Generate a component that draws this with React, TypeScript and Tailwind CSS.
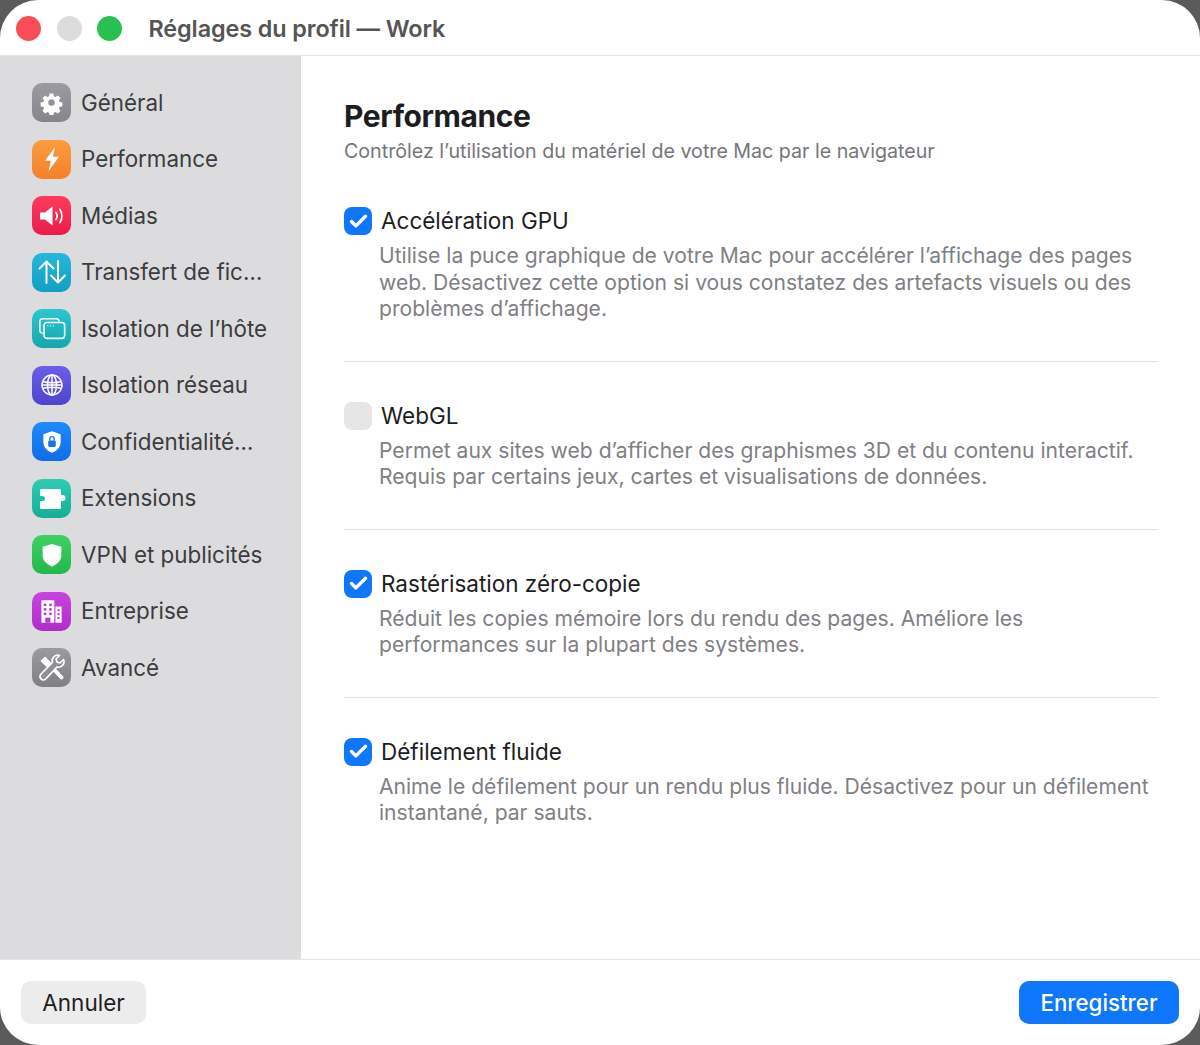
import type { ReactNode } from "react";
import { Check } from "lucide-react";

const SANS = "font-['Inter','Liberation_Sans',sans-serif]";

function Gear() {
  return (
    <svg viewBox="0 0 24 24" className="w-[25px] h-[25px]" fill="#fff">
      <path
        fillRule="evenodd"
        d="M10 2.500h4l.6 2.900 1.700.7 2.500-1.600 2.800 2.800-1.600 2.500.7 1.700 2.900.6v4l-2.900.6-.7 1.700 1.600 2.500-2.800 2.800-2.500-1.600-1.700.7-.6 2.900h-4l-.6-2.900-1.700-.7-2.500 1.600-2.800-2.800 1.600-2.500-.7-1.700-2.900-.6v-4l2.900-.6.7-1.700-1.600-2.500 2.800-2.800 2.500 1.600 1.700-.7zM12 8.600a3.400 3.400 0 1 0 0 6.800 3.400 3.400 0 0 0 0-6.800z"
        transform="translate(1.200 1.200) scale(.9)"
      />
    </svg>
  );
}

function Bolt() {
  return (
    <svg viewBox="0 0 24 24" className="w-[28px] h-[28px]" fill="#fff">
      <path d="M14.500 2 6 13.600h5L9 22.500 18 10h-5.200z" />
    </svg>
  );
}

function Speaker() {
  return (
    <svg viewBox="0 0 32 32" className="w-[32px] h-[32px]" fill="none" stroke="#fff">
      <path d="M4 12.500h5L16.500 6.500v19L9 19.500H4z" fill="#fff" stroke="none" />
      <path d="M20 12.500c1.400 2 1.400 5 0 7" strokeWidth="1.800" strokeLinecap="round" />
      <path d="M24 9.500c2.400 3.800 2.400 9.200 0 13" strokeWidth="1.800" strokeLinecap="round" />
    </svg>
  );
}

function Transfer() {
  return (
    <svg viewBox="0 0 32 32" className="w-[32px] h-[32px]" fill="none" stroke="#fff" strokeWidth="2" strokeLinecap="round" strokeLinejoin="round">
      <path d="M10.500 27V5.500M3.500 12.500l7-7 7 7" />
      <path d="M22 5v21.500M15 19.500l7 7 7-7" />
    </svg>
  );
}

function Windows() {
  return (
    <svg viewBox="0 0 32 32" className="w-[30px] h-[30px]" fill="none" stroke="#fff" strokeWidth="1.700">
      <path d="M6 20.500c-1.500 0-3-1-3-3V8c0-2 1.500-3 3-3h14.500c2 0 3 1.300 3 3" />
      <rect x="7.500" y="9" width="22" height="17" rx="3" />
      <path d="M11 12.500h1.200M14 12.500h1.200M17 12.500h1.200" strokeWidth="1.200" />
    </svg>
  );
}

function Globe() {
  return (
    <svg viewBox="0 0 24 24" className="w-[24px] h-[24px]" fill="none" stroke="#fff" strokeWidth="1.500">
      <circle cx="12" cy="12" r="10" />
      <ellipse cx="12" cy="12" rx="4.500" ry="10" />
      <path d="M12 2v20M2.600 8.500c5 1.600 13.800 1.600 18.800 0M2.600 15.500c5-1.600 13.800-1.600 18.800 0M2 12h20" />
    </svg>
  );
}

function ShieldLock() {
  return (
    <svg viewBox="0 0 24 24" className="w-[26px] h-[26px]">
      <path d="M12 2 20 4.800v7.200c0 4.800-3.200 8-8 10-4.800-2-8-5.200-8-10V4.800z" fill="#fff" />
      <rect x="8.500" y="10.500" width="7" height="6" rx="1.200" fill="#1673f0" />
      <path d="M10 10.500V9a2 2 0 0 1 4 0v1.500" fill="none" stroke="#1673f0" strokeWidth="1.300" />
    </svg>
  );
}

function Puzzle() {
  return (
    <svg viewBox="0 0 32 32" className="w-[32px] h-[32px]" fill="#fff">
      <path d="M4 8.500C4 7.700 4.700 7 5.500 7h18c.8 0 1.500.7 1.500 1.500V13h1.500a3 3 0 0 1 0 6H25v6.500c0 .8-.7 1.500-1.500 1.500h-18C4.700 27 4 26.300 4 25.500V19h2.500a2.500 2.500 0 0 0 0-5H4z" />
    </svg>
  );
}

function Shield() {
  return (
    <svg viewBox="0 0 24 24" className="w-[28px] h-[28px]" fill="#fff">
      <path d="M12 2.500 20 5v7.500c0 4.500-3.300 7.300-8 9.500-4.700-2.200-8-5-8-9.500V5z" />
    </svg>
  );
}

function Building() {
  return (
    <svg viewBox="0 0 24 24" className="w-[27px] h-[27px]">
      <path d="M3 2h11.500v20H3zM15.500 7.500h5.500V22h-5.500z" fill="#fff" />
      <g fill="#bb37d2">
        <rect x="5.200" y="5" width="2.200" height="2.200" />
        <rect x="10" y="5" width="2.200" height="2.200" />
        <rect x="5.200" y="9" width="2.200" height="2.200" />
        <rect x="10" y="9" width="2.200" height="2.200" />
        <rect x="5.200" y="13" width="2.200" height="2.200" />
        <rect x="10" y="13" width="2.200" height="2.200" />
        <rect x="6.500" y="17.500" width="4.500" height="4.500" />
        <rect x="17.300" y="10" width="1.800" height="1.800" />
        <rect x="17.300" y="13.500" width="1.800" height="1.800" />
        <rect x="17.300" y="17" width="1.800" height="1.800" />
      </g>
    </svg>
  );
}

function Tools() {
  return (
    <svg viewBox="0 0 32 32" className="w-[32px] h-[32px]" fill="none" stroke="#fff" strokeLinecap="round" strokeLinejoin="round">
      {/* screwdriver */}
      <path d="M14 13 25.500 25.500" strokeWidth="4" />
      <path d="M5.500 9 9 5.500 14.500 11 11 14.500z" fill="#fff" strokeWidth="1.500" />
      {/* wrench, outlined */}
      <path
        d="M27.500 7.500 24 11l-3-1-1-3 3.500-3.500a5.500 5.500 0 0 0-7 7L5 22a3.200 3.200 0 0 0 4.800 4.800L21 15a5.500 5.500 0 0 0 6.500-7.500z"
        fill="#8f8f94"
        strokeWidth="1.700"
      />
    </svg>
  );
}

const navItems: { label: string; bg: string; icon: ReactNode }[] = [
  { label: "Général", bg: "bg-linear-to-b from-[#9b9ba1] to-[#85858b]", icon: <Gear /> },
  { label: "Performance", bg: "bg-linear-to-b from-[#fb9c3e] to-[#f4812a]", icon: <Bolt /> },
  { label: "Médias", bg: "bg-linear-to-b from-[#fb3b5d] to-[#ea1a4b]", icon: <Speaker /> },
  { label: "Transfert de fic…", bg: "bg-linear-to-b from-[#25b7dc] to-[#119fc4]", icon: <Transfer /> },
  { label: "Isolation de l’hôte", bg: "bg-linear-to-b from-[#2cc6d0] to-[#14a8ad]", icon: <Windows /> },
  { label: "Isolation réseau", bg: "bg-linear-to-b from-[#6b5ee8] to-[#4e44cf]", icon: <Globe /> },
  { label: "Confidentialité…", bg: "bg-linear-to-b from-[#1f8bfb] to-[#0f6ce8]", icon: <ShieldLock /> },
  { label: "Extensions", bg: "bg-linear-to-b from-[#2ccdb4] to-[#14ae97]", icon: <Puzzle /> },
  { label: "VPN et publicités", bg: "bg-linear-to-b from-[#3dd062] to-[#22b849]", icon: <Shield /> },
  { label: "Entreprise", bg: "bg-linear-to-b from-[#c943df] to-[#b02cc8]", icon: <Building /> },
  { label: "Avancé", bg: "bg-linear-to-b from-[#9a9a9f] to-[#7f7f85]", icon: <Tools /> },
];

const options = [
  {
    title: "Accélération GPU",
    checked: true,
    lines: [
      "Utilise la puce graphique de votre Mac pour accélérer l’affichage des pages",
      "web. Désactivez cette option si vous constatez des artefacts visuels ou des",
      "problèmes d’affichage.",
    ],
  },
  {
    title: "WebGL",
    checked: false,
    lines: [
      "Permet aux sites web d’afficher des graphismes 3D et du contenu interactif.",
      "Requis par certains jeux, cartes et visualisations de données.",
    ],
  },
  {
    title: "Rastérisation zéro-copie",
    checked: true,
    lines: [
      "Réduit les copies mémoire lors du rendu des pages. Améliore les",
      "performances sur la plupart des systèmes.",
    ],
  },
  {
    title: "Défilement fluide",
    checked: true,
    lines: [
      "Anime le défilement pour un rendu plus fluide. Désactivez pour un défilement",
      "instantané, par sauts.",
    ],
  },
];

export default function App() {
  return (
    <div className={`h-[1045px] w-[1200px] bg-[#5b5b5b] ${SANS}`}>
      <div className="h-full w-full rounded-[38px] bg-white overflow-hidden flex flex-col">
        {/* Title bar */}
        <div className="h-[56px] shrink-0 border-b border-[#e4e4e4] flex items-center pl-[16px] pt-[1px]">
          <div className="flex items-center gap-[15.5px]">
            <span className="w-[25px] h-[25px] rounded-full bg-[#fb4d55]" />
            <span className="w-[25px] h-[25px] rounded-full bg-[#dcdcdc]" />
            <span className="w-[25px] h-[25px] rounded-full bg-[#2ac04f]" />
          </div>
          <span className="ml-[26.5px] mt-[1px] text-[23.4px] font-semibold text-[#555555] tracking-[-0.1px]">
            Réglages du profil — Work
          </span>
        </div>

        <div className="flex-1 flex min-h-0">
          {/* Sidebar */}
          <div className="w-[301px] shrink-0 bg-[#dcdcde] pt-[27px] pl-[32px] flex flex-col gap-[17.5px]">
            {navItems.map((item) => (
              <div key={item.label} className="flex items-center h-[39px] gap-[10px]">
                <span className={`w-[39px] h-[39px] rounded-[10px] flex items-center justify-center shrink-0 ${item.bg}`}>
                  {item.icon}
                </span>
                <span className="text-[22.4px] text-[#3c3c40] whitespace-nowrap">{item.label}</span>
              </div>
            ))}
          </div>

          {/* Content */}
          <div className="flex-1 pl-[43px] pr-[42px] pt-[40px]">
            <h1 className="text-[30px] leading-[40px] font-bold text-[#1d1d1f] tracking-[-0.4px]">Performance</h1>
            <p className="text-[19.65px] leading-[30px] text-[#76767a]">
              Contrôlez l’utilisation du matériel de votre Mac par le navigateur
            </p>
            <div className="mt-[41px] flex flex-col">
              {options.map((opt, i) => (
                <div
                  key={opt.title}
                  className={
                    i < options.length - 1
                      ? "border-b border-[#e2e2e2] pb-[38.5px] mb-[39.5px]"
                      : ""
                  }
                >
                  <div className="flex items-center h-[28px] gap-[9px]">
                    {opt.checked ? (
                      <span className="w-[28px] h-[28px] rounded-[8px] bg-[#0f77fb] flex items-center justify-center shrink-0">
                        <Check size={21} color="#fff" strokeWidth={4} />
                      </span>
                    ) : (
                      <span className="w-[28px] h-[28px] rounded-[8px] bg-[#e6e6e6] shrink-0" />
                    )}
                    <span className="text-[22.5px] text-[#1d1d1f]">{opt.title}</span>
                  </div>
                  <div className="mt-[8px] ml-[35px] text-[21.1px] leading-[26.5px] text-[#808084] whitespace-nowrap">
                    {opt.lines.map((line) => (
                      <div key={line}>{line}</div>
                    ))}
                  </div>
                </div>
              ))}
            </div>
          </div>
        </div>

        {/* Footer */}
        <div className="h-[86px] shrink-0 border-t border-[#e4e4e4] flex items-center justify-between px-[21px]">
          <button className="w-[125px] h-[43px] rounded-[10px] bg-[#ececec] text-[22.5px] text-[#1d1d1f]">Annuler</button>
          <button className="w-[160px] h-[43px] rounded-[10px] bg-[#0f77fb] text-[22.3px] font-medium text-white">Enregistrer</button>
        </div>
      </div>
    </div>
  );
}
